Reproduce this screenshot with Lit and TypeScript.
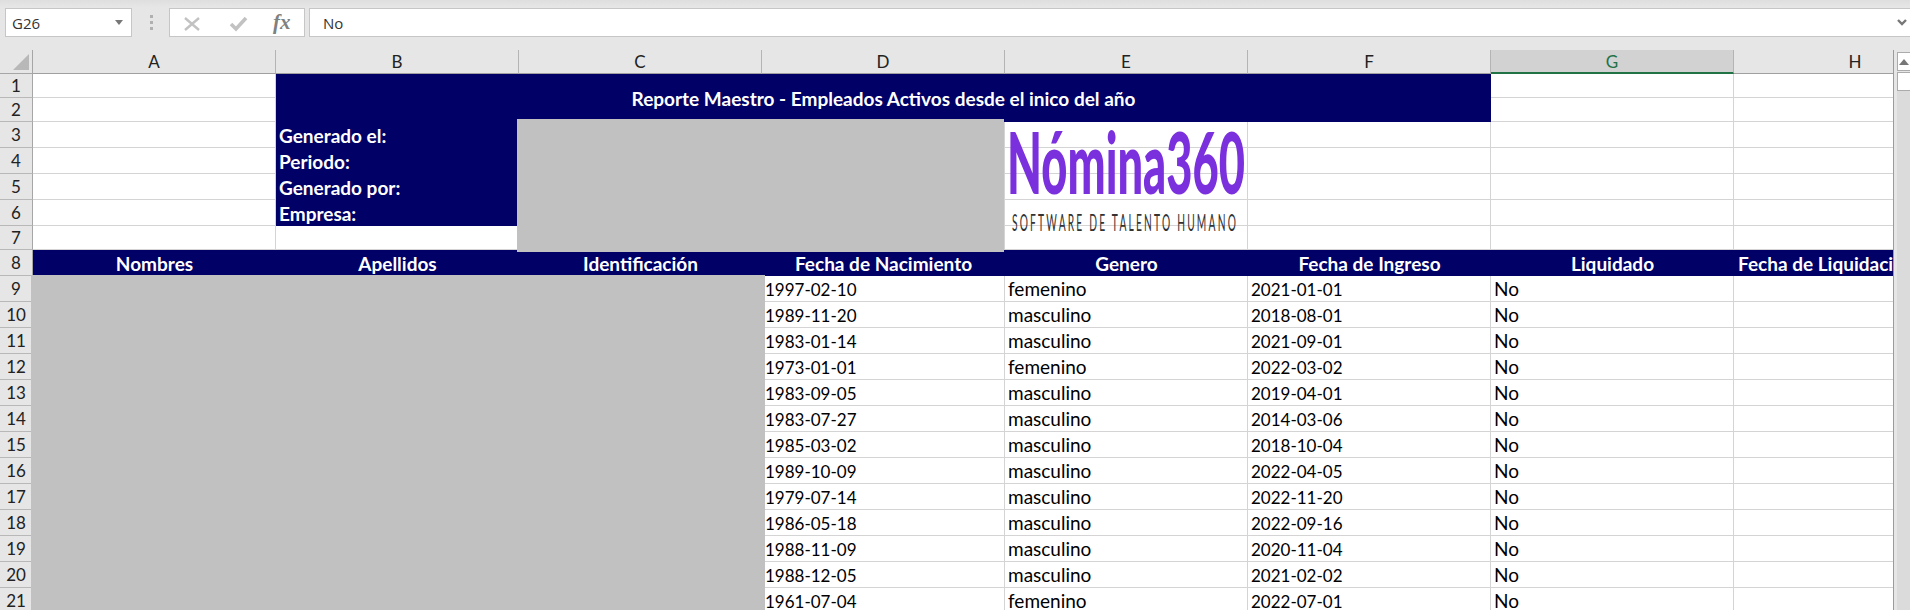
import { LitElement, html, css, svg } from 'lit';
import { customElement } from 'lit/decorators.js';

const COLUMNS = ['A', 'B', 'C', 'D', 'E', 'F', 'G', 'H'];

const HEADERS = [
  'Nombres',
  'Apellidos',
  'Identificación',
  'Fecha de Nacimiento',
  'Genero',
  'Fecha de Ingreso',
  'Liquidado',
];

const EMPLOYEES = [
  ['1997-02-10', 'femenino', '2021-01-01'],
  ['1989-11-20', 'masculino', '2018-08-01'],
  ['1983-01-14', 'masculino', '2021-09-01'],
  ['1973-01-01', 'femenino', '2022-03-02'],
  ['1983-09-05', 'masculino', '2019-04-01'],
  ['1983-07-27', 'masculino', '2014-03-06'],
  ['1985-03-02', 'masculino', '2018-10-04'],
  ['1989-10-09', 'masculino', '2022-04-05'],
  ['1979-07-14', 'masculino', '2022-11-20'],
  ['1986-05-18', 'masculino', '2022-09-16'],
  ['1988-11-09', 'masculino', '2020-11-04'],
  ['1988-12-05', 'masculino', '2021-02-02'],
  ['1961-07-04', 'femenino', '2022-07-01'],
];

const META = ['Generado el:', 'Periodo:', 'Generado por:', 'Empresa:'];

@customElement('app-root')
export class AppRoot extends LitElement {
  static styles = css`
    :host {
      display: block;
      width: 1910px;
      height: 610px;
      overflow: hidden;
      background: #e6e6e6;
      font-family: 'Lato', 'Liberation Sans', sans-serif;
      color: #000;
    }

    .formula-bar {
      display: flex;
      align-items: center;
      gap: 4px;
      height: 50px;
      box-sizing: border-box;
      padding: 8px 0 13px 5px;
      background: linear-gradient(#dedede, #e6e6e6 7px);
    }

    .box {
      display: flex;
      align-items: center;
      height: 29px;
      box-sizing: border-box;
      background: #fff;
      border: 1px solid #c6c6c6;
    }

    .name-box {
      width: 127px;
      justify-content: space-between;
      padding: 0 8px 0 6px;
      font-family: 'Open Sans', sans-serif;
      font-size: 15px;
      color: #333;
    }

    .caret {
      width: 0;
      height: 0;
      border: 4px solid transparent;
      border-top: 5px solid #777;
      border-bottom: 0;
    }

    .grip {
      display: flex;
      flex-direction: column;
      gap: 3px;
      width: 3px;
      margin: 0 12px 0 14px;
    }

    .grip i {
      height: 3px;
      background: #b0b0b0;
    }

    .buttons {
      width: 136px;
      position: relative;
    }

    .buttons svg {
      position: absolute;
      top: 0;
      left: 0;
    }

    .input {
      flex: 1;
      justify-content: space-between;
      padding: 0 3px 0 13px;
      border-right: 0;
      font-family: 'Open Sans', sans-serif;
      font-size: 15px;
      color: #333;
    }

    .sheet {
      display: flex;
      height: 560px;
    }

    .viewport {
      position: relative;
      width: 1894px;
      overflow: hidden;
      border-right: 1px solid #9b9b9b;
      box-sizing: border-box;
    }

    .grid {
      display: grid;
      grid-template-columns: 33px repeat(8, 243px);
      grid-template-rows: 24px 24px 24px 26px 26px 26px 26px 24px 26px repeat(13, 26px);
      width: 1977px;
      background: #fff;
      font-size: 19px;
      line-height: 1;
    }

    .col-head,
    .row-head,
    .corner {
      display: flex;
      align-items: center;
      justify-content: center;
      box-sizing: border-box;
      background: #e6e6e6;
      color: #222;
      font-size: 17px;
    }

    .corner {
      position: relative;
      border-right: 1px solid #a6a6a6;
      border-bottom: 1px solid #a6a6a6;
    }

    .corner::after {
      content: '';
      position: absolute;
      right: 3px;
      bottom: 3px;
      width: 16px;
      height: 16px;
      background: #b8b8b8;
      clip-path: polygon(100% 0, 100% 100%, 0 100%);
    }

    .col-head {
      border-right: 1px solid #b4b4b4;
      border-bottom: 1px solid #a0a0a0;
    }

    .col-head.active {
      background: #d2d2d2;
      color: #217346;
      border-bottom: 2px solid #217346;
    }

    .row-head {
      border-right: 1px solid #a6a6a6;
      border-bottom: 1px solid #b8b8b8;
    }

    .cell {
      display: flex;
      align-items: flex-end;
      box-sizing: border-box;
      min-width: 0;
      padding: 0 3px 3px;
      border-right: 1px solid #d4d4d4;
      border-bottom: 1px solid #d4d4d4;
      white-space: nowrap;
    }

    .cell.date {
      font-size: 17px;
    }

    .title {
      grid-column: 3 / 8;
      grid-row: 2 / 4;
      align-items: center;
      justify-content: center;
      padding: 0;
      border: 0;
      background: #000066;
      color: #fff;
      font-weight: 700;
    }

    .meta {
      grid-column: 3 / 5;
      padding-left: 3px;
      border: 0;
      background: #000066;
      color: #fff;
      font-weight: 700;
    }

    .band {
      justify-content: center;
      align-items: center;
      padding: 0;
      border: 0;
      background: #000066;
      color: #fff;
      font-weight: 700;
    }

    .band.start {
      justify-content: flex-start;
      padding-left: 4px;
    }

    .redact {
      position: absolute;
      background: #c1c1c1;
    }

    .redact.top {
      left: 517px;
      top: 69px;
      width: 487px;
      height: 133px;
    }

    .redact.list {
      left: 31px;
      top: 225px;
      width: 734px;
      height: 335px;
    }

    .logo {
      position: absolute;
      left: 1005px;
      top: 72px;
    }

    .scrollbar {
      flex: 1;
      display: flex;
      flex-direction: column;
      gap: 1px;
      padding: 2px 0 0 3px;
    }

    .scrollbar::after {
      content: '';
      flex: 1;
      margin-top: -1px;
      background: #dbdbdb;
    }

    .scroll-btn {
      display: flex;
      align-items: center;
      justify-content: center;
      height: 19px;
      box-sizing: border-box;
      background: #fff;
      border: 1px solid #ababab;
      border-right: 0;
    }

    .scroll-btn i {
      width: 0;
      height: 0;
      border: 5px solid transparent;
      border-bottom: 6px solid #777;
      border-top: 0;
    }
  `;

  renderButtons() {
    return html`
      <svg width="136" height="27" viewBox="0 0 136 27">
        <path d="M15 9 L29 21 M29 9 L15 21" stroke="#c2c2c2" stroke-width="2.4" fill="none" />
        <path d="M61 15 L66 20 L76 9" stroke="#c2c2c2" stroke-width="3.6" fill="none" />
        <text x="103" y="20" font-family="Liberation Serif" font-style="italic" font-weight="700" font-size="21" fill="#808080">fx</text>
      </svg>
    `;
  }

  renderLogo() {
    return svg`
      <svg class="logo" width="243" height="127" viewBox="0 0 243 127">
        <text x="2" y="72" font-family="Lato" font-weight="900" font-size="85" fill="#7a30dc"
          textLength="238" lengthAdjust="spacingAndGlyphs">Nómina360</text>
        <text x="7" y="109" font-family="Lato" font-size="23" letter-spacing="5" fill="#333"
          textLength="226" lengthAdjust="spacingAndGlyphs">SOFTWARE DE TALENTO HUMANO</text>
      </svg>
    `;
  }

  renderEmptyCells(count: number) {
    return Array.from({ length: count }, () => html`<div class="cell"></div>`);
  }

  render() {
    return html`
      <div class="formula-bar">
        <div class="box name-box">G26<span class="caret"></span></div>
        <div class="grip"><i></i><i></i><i></i></div>
        <div class="box buttons">${this.renderButtons()}</div>
        <div class="box input">
          No
          <svg width="10" height="7" viewBox="0 0 10 7"><path d="M1 1 L5 5 L9 1" stroke="#777" stroke-width="2.4" fill="none" /></svg>
        </div>
      </div>
      <div class="sheet">
        <div class="viewport">
          <div class="grid">
            <div class="corner"></div>
            ${COLUMNS.map(
              (c) => html`<div class="col-head ${c === 'G' ? 'active' : ''}">${c}</div>`
            )}

            <div class="row-head">1</div>
            <div class="cell"></div>
            <div class="cell title">Reporte Maestro - Empleados Activos desde el inico del año</div>
            ${this.renderEmptyCells(2)}

            <div class="row-head">2</div>
            <div class="cell"></div>
            ${this.renderEmptyCells(2)}

            ${META.map(
              (label, i) => html`
                <div class="row-head">${i + 3}</div>
                <div class="cell"></div>
                <div class="cell meta">${label}</div>
                ${this.renderEmptyCells(5)}
              `
            )}

            <div class="row-head">7</div>
            ${this.renderEmptyCells(8)}

            <div class="row-head">8</div>
            ${HEADERS.map((h) => html`<div class="cell band">${h}</div>`)}
            <div class="cell band start">Fecha de Liquidación</div>

            ${EMPLOYEES.map(
              (row, i) => html`
                <div class="row-head">${i + 9}</div>
                ${this.renderEmptyCells(3)}
                <div class="cell date">${row[0]}</div>
                <div class="cell">${row[1]}</div>
                <div class="cell date">${row[2]}</div>
                <div class="cell">No</div>
                <div class="cell"></div>
              `
            )}
          </div>
          ${this.renderLogo()}
          <div class="redact top"></div>
          <div class="redact list"></div>
        </div>
        <div class="scrollbar">
          <div class="scroll-btn"><i></i></div>
          <div class="scroll-btn"></div>
        </div>
      </div>
    `;
  }
}
